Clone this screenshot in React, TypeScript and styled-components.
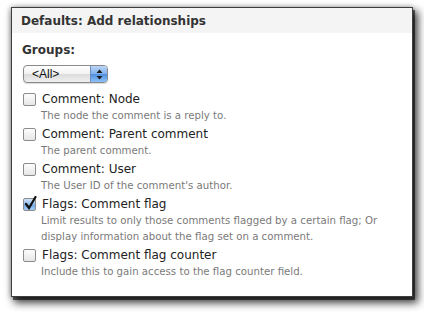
import React from "react";
import styled, { createGlobalStyle } from "styled-components";

const Global = createGlobalStyle`
  html, body { margin: 0; padding: 0; background: #fff; }
  body { font-family: "DejaVu Sans", Verdana, sans-serif; }
`;

const Page = styled.div`
  padding: 7px 0 16px 11px;
`;

const Panel = styled.div`
  width: 400px;
  height: 288px;
  border: 1px solid #3e3e3e;
  background: #fff;
  box-shadow: 2px 3px 0 0 rgba(0, 0, 0, 0.55), 4px 5px 8px 1px rgba(0, 0, 0, 0.75),
    -1px 0 5px rgba(0, 0, 0, 0.3);
  display: flex;
  flex-direction: column;
`;

const Header = styled.div`
  height: 25px;
  background: #f4f4f4;
  display: flex;
  align-items: center;
  padding-left: 9px;
  font-weight: bold;
  font-size: 12px;
  color: #333;
`;

const Body = styled.div`
  padding: 8px 0 0 10px;
  display: flex;
  flex-direction: column;
`;

const GroupLabel = styled.div`
  font-weight: bold;
  font-size: 12px;
  color: #333;
  height: 18px;
  line-height: 18px;
`;

const Select = styled.div`
  margin: 6px 0 0 1px;
  width: 83px;
  height: 16px;
  border: 1px solid #8a8a8a;
  border-radius: 4px;
  display: flex;
  overflow: hidden;
  background: linear-gradient(#ffffff, #f2f2f2 50%, #dcdcdc 51%, #efefef);
  box-shadow: 0 1px 1px rgba(0,0,0,0.15);
`;

const SelectText = styled.div`
  flex: 1;
  font-family: "Liberation Sans", Arial, sans-serif;
  font-size: 12px;
  line-height: 16px;
  padding-left: 8px;
  color: #111;
`;

const SelectArrows = styled.div`
  width: 16px;
  border-left: 1px solid #6f8fc0;
  background: linear-gradient(#bcd6f5, #7fb0ec 50%, #4f8ee0 51%, #8cc2f7);
  display: flex;
  align-items: center;
  justify-content: center;
`;

const List = styled.div`
  margin-top: 7px;
  display: flex;
  flex-direction: column;
`;

const Item = styled.div`
  display: flex;
  flex-direction: column;
`;

const LabelRow = styled.div`
  display: flex;
  align-items: center;
  height: 18px;
`;

const Box = styled.div<{ $checked?: boolean }>`
  width: 11px;
  height: 11px;
  margin-left: 1px;
  border: 1px solid #8c8c8c;
  border-radius: 2px;
  background: ${(p) =>
    p.$checked
      ? "linear-gradient(#cfe3fa, #8fbcef 50%, #6aa4e8 51%, #a8d0f7)"
      : "linear-gradient(#fdfdfd, #e6e6e6)"};
  position: relative;
  flex-shrink: 0;
`;

const Check = styled.svg`
  position: absolute;
  left: 0px;
  top: -3px;
`;

const LabelText = styled.span`
  margin-left: 6px;
  font-size: 12px;
  color: #222;
`;

const Desc = styled.div`
  margin-left: 19px;
  font-size: 10.2px;
  line-height: 16px;
  color: #7a7a7a;
  padding-bottom: 1px;
  max-width: 350px;
`;

const items = [
  { label: "Comment: Node", desc: "The node the comment is a reply to." },
  { label: "Comment: Parent comment", desc: "The parent comment." },
  { label: "Comment: User", desc: "The User ID of the comment's author." },
  {
    label: "Flags: Comment flag",
    desc:
      "Limit results to only those comments flagged by a certain flag; Or display information about the flag set on a comment.",
    checked: true,
  },
  {
    label: "Flags: Comment flag counter",
    desc: "Include this to gain access to the flag counter field.",
  },
];

export default function App() {
  return (
    <>
      <Global />
      <Page>
        <Panel>
          <Header>Defaults: Add relationships</Header>
          <Body>
            <GroupLabel>Groups:</GroupLabel>
            <Select>
              <SelectText>&lt;All&gt;</SelectText>
              <SelectArrows>
                <svg width="7" height="11" viewBox="0 0 7 11">
                  <path d="M3.5 0.5 L6.5 4 H0.5 Z" fill="#1a1a1a" />
                  <path d="M3.5 10.5 L6.5 7 H0.5 Z" fill="#1a1a1a" />
                </svg>
              </SelectArrows>
            </Select>
            <List>
              {items.map((it) => (
                <Item key={it.label}>
                  <LabelRow>
                    <Box $checked={it.checked}>
                      {it.checked && (
                        <Check width="13" height="14" viewBox="0 0 13 14">
                          <path
                            d="M2 8 L5 12 L11.5 1"
                            stroke="#111"
                            strokeWidth="2.2"
                            fill="none"
                            strokeLinecap="round"
                          />
                        </Check>
                      )}
                    </Box>
                    <LabelText>{it.label}</LabelText>
                  </LabelRow>
                  <Desc>{it.desc}</Desc>
                </Item>
              ))}
            </List>
          </Body>
        </Panel>
      </Page>
    </>
  );
}
